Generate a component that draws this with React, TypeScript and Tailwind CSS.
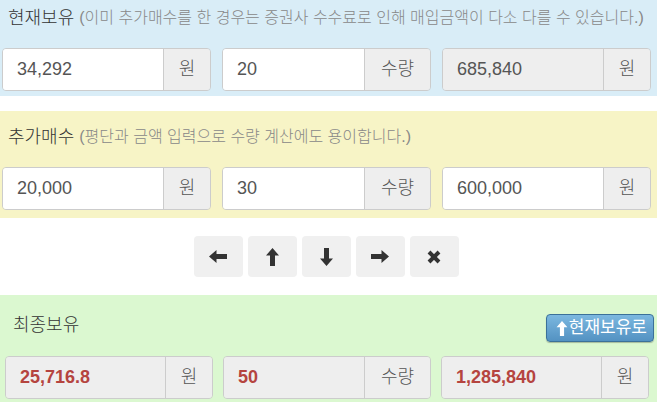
import type { ReactNode } from "react";

const font = { fontFamily: '"Liberation Sans", "Noto Sans CJK KR", sans-serif' };

type Field = { value: string; unit: string; readOnly?: boolean; result?: boolean };

function InputGroup({ value, unit, readOnly, result }: Field) {
  const wide = unit === "수량";
  return (
    <div className="flex h-[43px] overflow-hidden rounded-[4px] border border-[#cccccc]">
      <input
        readOnly
        value={value}
        className={`min-w-0 flex-1 pl-[14px] text-[18px] outline-none ${
          readOnly ? "bg-[#eeeeee]" : "bg-white"
        } ${result ? "font-bold text-[#b5443f]" : "text-[#555555]"}`}
        style={font}
      />
      <div
        className={`flex items-center justify-center border-l border-[#cccccc] bg-[#eeeeee] text-[18px] font-light text-[#555555] ${
          wide ? "w-[66px]" : "w-[47px]"
        }`}
      >
        {unit}
      </div>
    </div>
  );
}

function Row({ fields, className }: { fields: Field[]; className: string }) {
  return (
    <div className={`grid grid-cols-3 ${className}`}>
      {fields.map((f, i) => (
        <InputGroup key={i} {...f} />
      ))}
    </div>
  );
}

function NavButton({ children }: { children: ReactNode }) {
  return (
    <button className="flex h-[41px] w-[49px] items-center justify-center rounded-[4px] bg-[#f0f0f0] text-[#333333]">
      {children}
    </button>
  );
}

const ArrowLeft = () => (
  <svg width="18" height="13" viewBox="0 0 18 13" fill="currentColor">
    <polygon points="0,6.5 7.5,0 7.5,4 18,4 18,9 7.5,9 7.5,13" />
  </svg>
);
const ArrowRight = () => (
  <svg width="18" height="13" viewBox="0 0 18 13" fill="currentColor">
    <polygon points="18,6.5 10.5,0 10.5,4 0,4 0,9 10.5,9 10.5,13" />
  </svg>
);
const ArrowUp = ({ className = "" }: { className?: string }) => (
  <svg width="13" height="18" viewBox="0 0 13 18" fill="currentColor" className={className}>
    <polygon points="6.5,0 13,7.5 9,7.5 9,18 4,18 4,7.5 0,7.5" />
  </svg>
);
const ArrowDown = () => (
  <svg width="13" height="18" viewBox="0 0 13 18" fill="currentColor">
    <polygon points="6.5,18 13,10.5 9,10.5 9,0 4,0 4,10.5 0,10.5" />
  </svg>
);
const Cross = () => (
  <svg width="14" height="14" viewBox="0 0 14 14" fill="none" stroke="currentColor" strokeWidth="4">
    <path d="M2 2 L12 12 M12 2 L2 12" />
  </svg>
);

export default function App() {
  return (
    <div className="h-[402px] w-[657px] overflow-hidden bg-white text-[#333333]" style={font}>
      <section className="bg-[#d9edf7] pb-[5px] pl-[2px] pr-[6px] pt-[5px]">
        <div className="flex h-[26px] items-center pl-[6px]">
          <span className="text-[18px] font-light">현재보유</span>
          <span className="ml-[5px] whitespace-nowrap text-[16px] font-light text-[#888888]">
            (이미 추가매수를 한 경우는 증권사 수수료로 인해 매입금액이 다소 다를 수 있습니다.)
          </span>
        </div>
        <Row
          className="mt-[17px] gap-[11px]"
          fields={[
            { value: "34,292", unit: "원" },
            { value: "20", unit: "수량" },
            { value: "685,840", unit: "원", readOnly: true },
          ]}
        />
      </section>

      <section className="mt-[15px] bg-[#f7f4c6] pb-[8px] pl-[2px] pr-[6px] pt-[13px]">
        <div className="flex h-[26px] items-center pl-[6px]">
          <span className="text-[18px] font-light">추가매수</span>
          <span className="ml-[5px] whitespace-nowrap text-[16px] font-light text-[#888888]">
            (평단과 금액 입력으로 수량 계산에도 용이합니다.)
          </span>
        </div>
        <Row
          className="mt-[17px] gap-[11px]"
          fields={[
            { value: "20,000", unit: "원" },
            { value: "30", unit: "수량" },
            { value: "600,000", unit: "원" },
          ]}
        />
      </section>

      <div className="flex justify-center gap-[5px] pb-[18px] pr-[5px] pt-[18px]">
        <NavButton>
          <ArrowLeft />
        </NavButton>
        <NavButton>
          <ArrowUp />
        </NavButton>
        <NavButton>
          <ArrowDown />
        </NavButton>
        <NavButton>
          <ArrowRight />
        </NavButton>
        <NavButton>
          <Cross />
        </NavButton>
      </div>

      <section className="bg-[#dbf8d0] pb-[3px] pl-[5px] pr-[8px] pt-[19px]">
        <div className="flex items-start justify-between">
          <span className="mt-[1px] pl-[8px] text-[18px] font-light leading-[20px]">최종보유</span>
          <button className="mr-[-5px] flex h-[28px] items-center rounded-[4px] border border-[#3b7199] bg-gradient-to-b from-[#7cb8e0] to-[#5392c2] pl-[9px] pr-[6px] text-[17px] text-white shadow-[0_1px_1px_rgba(0,0,0,0.25)]">
            <ArrowUp className="mr-[1px] h-[15px] w-[12px]" />
            현재보유로
          </button>
        </div>
        <Row
          className="mt-[14px] gap-[10px]"
          fields={[
            { value: "25,716.8", unit: "원", readOnly: true, result: true },
            { value: "50", unit: "수량", readOnly: true, result: true },
            { value: "1,285,840", unit: "원", readOnly: true, result: true },
          ]}
        />
      </section>
    </div>
  );
}
